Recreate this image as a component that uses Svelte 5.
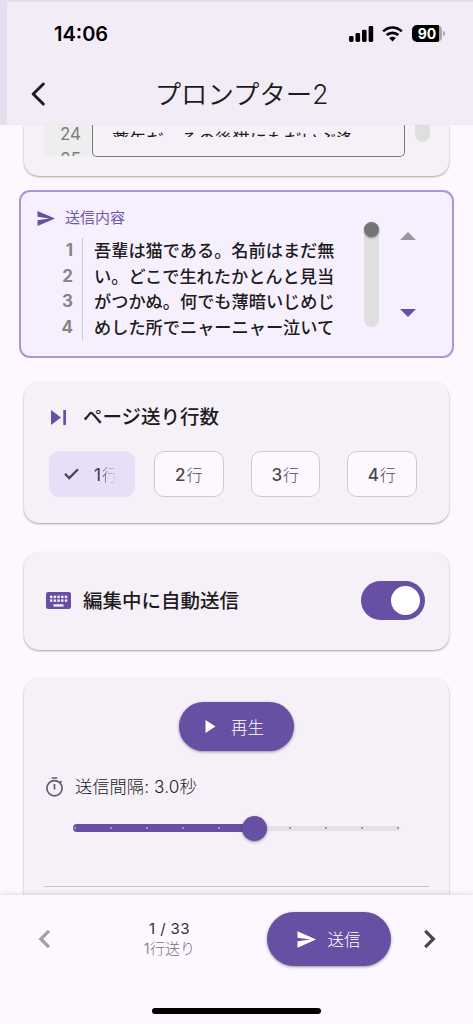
<script>
  let rows = 1;
  let autoSend = true;
  let page = 1;
  const total = 33;
  const interval = 3.0;
  const lines = [
    "吾輩は猫である。名前はまだ無",
    "い。どこで生れたかとんと見当",
    "がつかぬ。何でも薄暗いじめじ",
    "めした所でニャーニャー泣いて",
  ];
  const ticks = [0, 1, 2, 3, 4, 5, 6, 7, 8, 9];
</script>

<style>
  :global(body) {
    background: #fdf7ff;
  }

  .app {
    width: 473px;
    height: 1024px;
    display: flex;
    flex-direction: column;
    overflow: hidden;
    background: #fdf7ff;
    color: #1d1b20;
    font-family: Inter, "Noto Sans CJK JP", sans-serif;
  }

  .app * {
    box-sizing: border-box;
  }

  svg {
    display: block;
    flex: none;
  }

  button {
    border: 0;
    padding: 0;
    background: none;
    font-family: inherit;
    color: inherit;
    cursor: pointer;
  }

  header {
    flex: none;
    height: 125px;
    background: #f2ecf7;
    border-left: 7px solid #e6dfef;
    border-top: 2px solid #e6dfef;
    border-bottom: 1px solid #efe8f3;
  }

  .status {
    height: 63px;
    padding: 0 28px 0 47px;
    display: flex;
    align-items: center;
    color: #000;
  }

  .time {
    flex: 1;
    font-size: 20px;
    font-weight: 600;
    letter-spacing: 0;
  }

  .battery {
    margin-left: 9px;
    width: 30px;
    height: 17px;
    border-radius: 5px;
    background: linear-gradient(90deg, #000 27px, #aaa5ae 27px);
    color: #fff;
    font-size: 14px;
    line-height: 17px;
    font-weight: 700;
    text-align: center;
  }

  .cap {
    margin-left: 1px;
    width: 2px;
    height: 5px;
    border-radius: 0 2px 2px 0;
    background: #aaa5ae;
  }

  .bar {
    height: 58px;
    display: grid;
    grid-template-columns: 60px 1fr 60px;
    align-items: center;
  }

  .bar button {
    padding-left: 23px;
  }

  h1 {
    margin: 0 0 0 3px;
    font-size: 26.4px;
    line-height: 32px;
    font-weight: 350;
    text-align: center;
    letter-spacing: 0;
  }

  main {
    flex: 1;
    min-height: 0;
    overflow: hidden;
    padding: 0 24px;
  }

  .card {
    background: #f6f1f9;
    border-radius: 15px;
    box-shadow: 0 1px 2px rgba(0, 0, 0, 0.28), 0 1px 3px rgba(0, 0, 0, 0.08);
  }

  .editor {
    height: 51px;
    padding: 0 19px 20px 20px;
    border-radius: 0 0 15px 15px;
    display: flex;
    align-items: flex-start;
  }

  .gutter {
    width: 48px;
    height: 31px;
    overflow: hidden;
    padding: 0 11px 0 0;
    background: #eee;
    color: #7d7d7d;
    font-size: 17px;
    line-height: 25px;
    text-align: right;
  }

  .gutter div:first-child {
    margin-top: -3px;
  }

  .box {
    width: 313px;
    height: 32px;
    border: 1.5px solid #7b7580;
    border-top: 0;
    border-radius: 0 0 5px 5px;
    padding-left: 19px;
  }

  .box div {
    height: 12px;
    overflow: hidden;
    font-size: 17.3px;
    line-height: 26px;
    white-space: nowrap;
  }

  .box span {
    display: block;
    padding-top: 2px;
  }

  .end {
    margin-left: 10px;
    width: 15px;
    height: 17px;
    border-radius: 0 0 8px 8px;
    background: #dfdfdf;
  }

  .sending {
    margin: 14px -5px 0;
    height: 168px;
    border: 2.5px solid #a999d3;
    border-radius: 11px;
    background: #f6effe;
    padding: 16px 0 0 16px;
    display: flex;
  }

  .label {
    display: flex;
    align-items: center;
    height: 20px;
    gap: 10px;
    color: #7258b0;
    font-size: 15px;
    line-height: 20px;
  }

  .lines {
    display: grid;
    grid-template-columns: 36px 1fr;
    width: 300px;
    margin-top: 10px;
    font-size: 17.2px;
    line-height: 25.5px;
    font-weight: 500;
    white-space: nowrap;
  }

  .lines b {
    color: #858585;
    font-size: 17px;
    font-weight: 700;
    text-align: right;
  }

  .lines span {
    margin-left: 9px;
    padding-left: 11px;
    border-left: 1.5px solid #cdc8d2;
  }

  .scroll {
    width: 15px;
    height: 105px;
    margin: 14px 0 0 27px;
    border-radius: 8px;
    background: linear-gradient(transparent 7px, #dfdfdf 7px);
  }

  .scroll div {
    width: 15px;
    height: 15px;
    border-radius: 50%;
    background: #747474;
    box-shadow: 0 1px 2px rgba(0, 0, 0, 0.4);
  }

  .arrows {
    margin: 24px 0 0 21px;
    height: 85px;
    display: flex;
    flex-direction: column;
    justify-content: space-between;
  }

  .pages {
    margin-top: 24px;
    height: 141px;
    padding: 22px 33px 0 25px;
  }

  h2 {
    margin: 0;
    display: flex;
    align-items: center;
    font-size: 19.5px;
    line-height: 26px;
    font-weight: 500;
  }

  .chips {
    margin-top: 21px;
    display: flex;
    gap: 27px;
  }

  .chip {
    width: 69.5px;
    height: 46px;
    flex: none;
    border: 1.3px solid #cfc8d3;
    border-radius: 10px;
    background: #fdf7ff;
    color: #4b4750;
    font-size: 17px;
    font-weight: 500;
    display: flex;
    align-items: center;
    justify-content: center;
  }

  .chip i {
    font-style: normal;
    font-size: 16px;
    font-weight: 300;
    margin-left: 1px;
  }

  .chip.active {
    width: 86px;
    margin-right: -8px;
    border-color: #e7def7;
    background: #e7def7;
    justify-content: flex-start;
    padding-left: 14px;
  }

  .chip.active span {
    width: 21px;
    margin-left: 15px;
    overflow: hidden;
    white-space: nowrap;
    text-align: left;
    -webkit-mask-image: linear-gradient(90deg, #000 35%, transparent 110%);
    mask-image: linear-gradient(90deg, #000 35%, transparent 110%);
  }

  .auto {
    margin-top: 29px;
    height: 98px;
    padding: 0 24px 1px 22px;
    display: flex;
    align-items: center;
    justify-content: space-between;
  }

  .switch {
    width: 64px;
    height: 39px;
    padding: 5px;
    border-radius: 20px;
    background: #674fa3;
    display: flex;
  }

  .switch.on {
    justify-content: flex-end;
  }

  .switch span {
    width: 29px;
    height: 29px;
    border-radius: 50%;
    background: #fff;
  }

  .timer {
    margin-top: 28px;
    height: 260px;
    padding: 24px 20px 0;
  }

  .filled {
    display: flex;
    align-items: center;
    background: #674fa3;
    color: #fff;
    font-size: 16.5px;
    font-weight: 300;
    border-radius: 30px;
    box-shadow: 0 1px 3px rgba(0, 0, 0, 0.4);
  }

  .play {
    width: 115px;
    height: 49px;
    margin: 0 auto 0 135px;
    padding-left: 26px;
    gap: 15px;
  }

  .interval {
    margin-top: 24px;
    height: 24px;
    padding-left: 1px;
    display: flex;
    align-items: center;
    gap: 10px;
    font-size: 17.2px;
    line-height: 24px;
    font-weight: 300;
  }

  .interval span {
    letter-spacing: 0.1px;
  }

  .slider {
    position: relative;
    margin: 25px 29px 0;
    height: 8px;
    display: flex;
    align-items: center;
  }

  .on-track {
    width: 182px;
    height: 8px;
    border-radius: 4px;
    background: #674fa3;
  }

  .off-track {
    flex: 1;
    height: 5px;
    border-radius: 0 3px 3px 0;
    background: #e6e0e9;
  }

  .ticks {
    position: absolute;
    inset: 3px 1px auto 1px;
    display: flex;
    justify-content: space-between;
  }

  .ticks span {
    width: 2px;
    height: 2px;
    border-radius: 50%;
    background: #b5a5dc;
  }

  .ticks span.off {
    background: #8d8594;
  }

  .knob {
    position: absolute;
    left: 169px;
    top: -8px;
    width: 25px;
    height: 25px;
    border-radius: 50%;
    background: #674fa3;
    box-shadow: 0 1px 3px rgba(0, 0, 0, 0.4);
  }

  hr {
    margin: 54px 0 0;
    border: 0;
    height: 1px;
    background: #c9c3cf;
  }

  footer {
    position: relative;
    flex: none;
    height: 129px;
    background: #fdf7ff;
    box-shadow: 0 -1px 5px rgba(0, 0, 0, 0.12);
    display: flex;
    flex-direction: column;
    align-items: center;
  }

  .nav {
    width: 100%;
    height: 88px;
    padding: 0 36px 0 37.5px;
    display: flex;
    align-items: center;
  }

  .count {
    width: 100px;
    margin-left: 70px;
    text-align: center;
    font-size: 15px;
    line-height: 20px;
    color: #343138;
    letter-spacing: 0.4px;
  }

  .count small {
    display: block;
    font-size: 15px;
    font-weight: 300;
    color: #77727b;
    letter-spacing: 0.1px;
  }

  .send {
    width: 124px;
    height: 54px;
    margin: 0 33px 0 47px;
    padding-left: 30px;
    gap: 12px;
  }

  .home {
    margin-top: 25px;
    width: 169px;
    height: 6px;
    border-radius: 3px;
    background: #000;
  }
</style>

<div class="app">
  <header>
    <div class="status">
      <div class="time">14:06</div>
      <svg width="25" height="16" viewBox="0 0 25 16">
        <rect x="0" y="10" width="4.6" height="6" rx="1.4" />
        <rect x="6.5" y="7" width="4.6" height="9" rx="1.4" />
        <rect x="13" y="3.7" width="4.6" height="12.3" rx="1.4" />
        <rect x="19.6" y="0" width="4.6" height="16" rx="1.4" />
      </svg>
      <svg style:margin-left="8px" width="21" height="16" viewBox="0 0 21 16" fill="none" stroke="#000" stroke-width="2.7">
        <path d="M1.2 5.4C6.5 .2 14.5 .2 19.8 5.4" />
        <path d="M4.7 9.1C8 6 13 6 16.3 9.1" />
        <path d="M10.5 15.4L7.2 12C9 10.3 12 10.3 13.8 12Z" fill="#000" stroke="none" />
      </svg>
      <div class="battery">90</div>
      <div class="cap"></div>
    </div>
    <div class="bar">
      <button aria-label="戻る">
        <svg width="16" height="24" viewBox="0 0 16 24" fill="none" stroke="#1d1b20" stroke-width="3" stroke-linecap="round" stroke-linejoin="round">
          <path d="M13.3 2L3.2 12L13.3 22" />
        </svg>
      </button>
      <h1>プロンプター2</h1>
    </div>
  </header>

  <main>
    <section class="card editor">
      <div class="gutter">
        <div>24</div>
        <div>25</div>
      </div>
      <div class="box"><div><span>薬缶だ。その後猫にもだいぶ逢</span></div></div>
      <div class="end"></div>
    </section>

    <section class="sending">
      <div>
        <div class="label">
          <svg width="18" height="15" viewBox="0 0 18 15" fill="#674fa3">
            <path d="M.5 0L18 7.5L.5 15V9.2L12.5 7.5L.5 5.8Z" />
          </svg>
          送信内容
        </div>
        <div class="lines">
          {#each lines as line, i}
            <b>{i + 1}</b>
            <span>{line}</span>
          {/each}
        </div>
      </div>
      <div class="scroll"><div></div></div>
      <div class="arrows">
        <svg width="16" height="8" viewBox="0 0 16 8" fill="#9b94a2"><path d="M0 8L8 0L16 8Z" /></svg>
        <svg width="16" height="8" viewBox="0 0 16 8" fill="#674fa3"><path d="M0 0H16L8 8Z" /></svg>
      </div>
    </section>

    <section class="card pages">
      <h2>
        <svg style:margin="0 17px 0 2px" width="15" height="15" viewBox="0 0 15 15" fill="#674fa3">
          <path d="M0 0L10 7.5L0 15ZM12.3 0H15V15H12.3Z" />
        </svg>
        ページ送り行数
      </h2>
      <div class="chips">
        {#each [1, 2, 3, 4] as n}
          <button class="chip" class:active={n === rows} on:click={() => (rows = n)}>
            {#if n === rows}
              <svg width="15" height="12" viewBox="0 0 15 12" fill="none" stroke="#4b4455" stroke-width="2.3">
                <path d="M1 5.8L5.2 10L14 1.2" />
              </svg>
            {/if}
            <span>{n}<i>行</i></span>
          </button>
        {/each}
      </div>
    </section>

    <section class="card auto">
      <h2>
        <svg style:margin-right="12px" width="25" height="17" viewBox="0 0 25 17">
          <rect width="25" height="17" rx="2.3" fill="#674fa3" />
          <g fill="#f6f1f9">
            {#each [0, 1, 2, 3, 4] as k}
              <rect x={4 + k * 3.7} y="3.7" width="2.4" height="2.4" />
              <rect x={4 + k * 3.7} y="7.4" width="2.4" height="2.4" />
            {/each}
            <rect x="7.5" y="12.3" width="10" height="2.3" />
          </g>
        </svg>
        編集中に自動送信
      </h2>
      <button class="switch" class:on={autoSend} aria-label="自動送信" on:click={() => (autoSend = !autoSend)}>
        <span></span>
      </button>
    </section>

    <section class="card timer">
      <button class="filled play">
        <svg width="11" height="13" viewBox="0 0 11 13" fill="#fff"><path d="M.5 0L10.5 6.5L.5 13Z" /></svg>
        再生
      </button>
      <div class="interval">
        <svg width="20" height="20" viewBox="0 0 20 20" fill="none" stroke="#625b71" stroke-width="1.7">
          <circle cx="9.5" cy="11.3" r="7.6" />
          <path d="M6.7 1H12.3M9.5 7V12.5M15 5.8L16.6 4.2" />
        </svg>
        <span>送信間隔: {interval.toFixed(1)}秒</span>
      </div>
      <div class="slider">
        <div class="on-track"></div>
        <div class="off-track"></div>
        <div class="ticks">
          {#each ticks as t}
            <span class:off={t > 5}></span>
          {/each}
        </div>
        <div class="knob"></div>
      </div>
      <hr />
    </section>
  </main>

  <footer>
    <div class="nav">
      <button aria-label="前へ" on:click={() => (page = Math.max(1, page - 1))}>
        <svg width="12" height="20" viewBox="0 0 12 20" fill="none" stroke="#a39ea7" stroke-width="3.2">
          <path d="M11 1.8L2.8 10L11 18.2" />
        </svg>
      </button>
      <div class="count">
        {page} / {total}
        <small>{rows}行送り</small>
      </div>
      <button class="filled send">
        <svg width="19" height="17" viewBox="0 0 19 17" fill="#fff">
          <path d="M.5 .3L19 8.5L.5 16.7V10.3L13.5 8.5L.5 6.7Z" />
        </svg>
        送信
      </button>
      <button aria-label="次へ" on:click={() => (page = Math.min(total, page + 1))}>
        <svg width="12" height="20" viewBox="0 0 12 20" fill="none" stroke="#49454f" stroke-width="3.2">
          <path d="M1.2 1.8L9.4 10L1.2 18.2" />
        </svg>
      </button>
    </div>
    <div class="home"></div>
  </footer>
</div>
